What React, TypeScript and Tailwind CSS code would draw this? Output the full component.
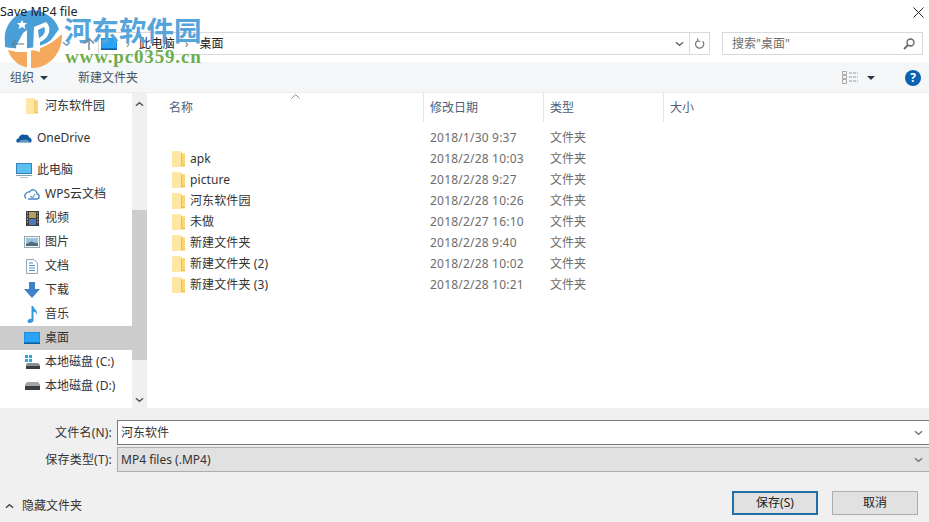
const FONT = "font-['Noto_Sans','Noto_Sans_CJK_SC',sans-serif]";

const Folder = ({ className = "w-[13px] h-[16px]" }: { className?: string }) => (
  <svg viewBox="0 0 13 15" preserveAspectRatio="none" className={className}>
    <path d="M0 0.5H9L10 2H13V15H0Z" fill="#fbd774" />
    <path d="M0 0.5H9L10 2V13H13V15H0Z" fill="#fde7a3" />
    <path d="M9 2L10 2V13H13V14H9Z" fill="#e8c05f" />
  </svg>
);

const Chevron = ({ up = false, color = "#555" }: { up?: boolean; color?: string }) => (
  <svg viewBox="0 0 10 6" className="w-[9px] h-[6px]">
    <path d={up ? "M1 5L5 1.5L9 5" : "M1 1L5 4.5L9 1"} fill="none" stroke={color} strokeWidth="1.6" />
  </svg>
);

const Caret = () => (
  <svg viewBox="0 0 8 4" className="w-[8px] h-[4px]">
    <path d="M0 0H8L4 4Z" fill="#2b3a4a" />
  </svg>
);

const icons: Record<string, React.ReactNode> = {
  folder: <Folder className="w-[12px] h-[16px]" />,
  cloud: (
    <svg viewBox="0 0 16 10" className="w-[16px] h-[10px]">
      <path d="M1 9.5C-0.5 8 0.5 5.5 2.5 5.5C3 2.5 6 0.5 9 2C11 1 13 2.5 13 4.5C15 4.5 16.5 7 15 9.5Z" fill="#0f5a9e" />
      <path d="M3 9.5C3 7.5 6 6.5 8 7C10 6 13 7 14 9.5Z" fill="#fff" opacity="0.35" />
    </svg>
  ),
  pc: (
    <svg viewBox="0 0 16 15" className="w-[16px] h-[15px]">
      <rect x="0.5" y="0.5" width="15" height="10" fill="#5cc0f2" stroke="#3a7fb5" />
      <rect x="0" y="12" width="16" height="1" fill="#7fa3bd" />
      <rect x="4" y="14" width="8" height="1" fill="#b5c5d1" />
    </svg>
  ),
  wps: (
    <svg viewBox="0 0 16 12" className="w-[16px] h-[12px]">
      <path d="M4 11H12.5C16 11 16 6.5 13 6C13 2 8 0 5.5 4C2 3.5 -1 8 2 10.5" fill="none" stroke="#4a86c5" strokeWidth="1.3" />
      <path d="M6.5 8L8.5 10L11 6" fill="none" stroke="#67a8dc" strokeWidth="1.3" />
    </svg>
  ),
  video: (
    <svg viewBox="0 0 13 15" className="w-[13px] h-[15px]">
      <rect width="13" height="15" fill="#3d3d3d" />
      <rect x="3" y="1" width="7" height="6" fill="#b5a062" />
      <rect x="3" y="8" width="7" height="6" fill="#4d7ab8" />
      <path d="M1 2h1M1 5h1M1 8h1M1 11h1M11 2h1M11 5h1M11 8h1M11 11h1" stroke="#ddd" strokeWidth="1.2" />
    </svg>
  ),
  image: (
    <svg viewBox="0 0 16 12" className="w-[16px] h-[12px]">
      <rect x="0.5" y="0.5" width="15" height="11" fill="#f2f5f8" stroke="#9aa5ad" />
      <rect x="2" y="2" width="12" height="8" fill="#9cc3dc" />
      <path d="M2 8L7 5.5L14 7.5V10H2Z" fill="#4f6b7d" />
    </svg>
  ),
  doc: (
    <svg viewBox="0 0 12 15" className="w-[12px] h-[15px]">
      <path d="M0.5 0.5H8L11.5 4V14.5H0.5Z" fill="#fbfcfd" stroke="#9aa5ad" />
      <path d="M3 4H7M3 6.5H9M3 9H9M3 11.5H9" stroke="#4f93c4" />
    </svg>
  ),
  download: (
    <svg viewBox="0 0 16 16" className="w-[16px] h-[16px]">
      <path d="M5 0H11V7H16L8 16L0 7H5Z" fill="#3f82cb" />
    </svg>
  ),
  music: (
    <svg viewBox="0 0 11 17" className="w-[11px] h-[17px]">
      <path d="M4.5 0H6C6.5 3 11 4 10 9C9.5 6.5 8 6 6.5 5.5V14C6.5 16 4.5 17 2.5 17C0.5 17 0 15 1 14C2 13 3.5 12.5 4.5 13Z" fill="#2f97dc" />
    </svg>
  ),
  desktop: (
    <svg viewBox="0 0 16 12" className="w-[16px] h-[12px]">
      <rect width="16" height="12" fill="#1f8fe8" />
      <rect x="1" y="1" width="14" height="9" fill="#2aa3f5" />
      <rect y="10.5" width="16" height="1.5" fill="#0f5f9e" />
    </svg>
  ),
  driveC: (
    <svg viewBox="0 0 15 14" className="w-[15px] h-[14px]">
      <path d="M0 0h3v3H0zM4 0h3v3H4zM0 4h3v3H0zM4 4h3v3H4z" fill="#2fa8d8" />
      <path d="M2 8H13L15 10V14H1V10Z" fill="#8a8f93" />
      <rect x="1" y="11" width="14" height="3" fill="#3c3f42" />
    </svg>
  ),
  driveD: (
    <svg viewBox="0 0 15 8" className="w-[15px] h-[8px]">
      <path d="M2 0H13L15 2.5V8H0V2.5Z" fill="#a3a7aa" />
      <rect y="4" width="15" height="4" fill="#3c3f42" />
    </svg>
  ),
};

const navGroups = [
  [{ icon: "folder", label: "河东软件园", indent: true }],
  [{ icon: "cloud", label: "OneDrive", indent: false }],
  [
    { icon: "pc", label: "此电脑", indent: false },
    { icon: "wps", label: "WPS云文档", indent: true },
    { icon: "video", label: "视频", indent: true },
    { icon: "image", label: "图片", indent: true },
    { icon: "doc", label: "文档", indent: true },
    { icon: "download", label: "下载", indent: true },
    { icon: "music", label: "音乐", indent: true },
    { icon: "desktop", label: "桌面", indent: true, selected: true },
    { icon: "driveC", label: "本地磁盘 (C:)", indent: true },
    { icon: "driveD", label: "本地磁盘 (D:)", indent: true },
  ],
];

const files = [
  { name: "", date: "2018/1/30 9:37" },
  { name: "apk", date: "2018/2/28 10:03" },
  { name: "picture", date: "2018/2/28 9:27" },
  { name: "河东软件园", date: "2018/2/28 10:26" },
  { name: "未做", date: "2018/2/27 16:10" },
  { name: "新建文件夹", date: "2018/2/28 9:40" },
  { name: "新建文件夹 (2)", date: "2018/2/28 10:02" },
  { name: "新建文件夹 (3)", date: "2018/2/28 10:21" },
];

const columns = [
  { label: "名称", width: "w-[270px]" },
  { label: "修改日期", width: "w-[120px]" },
  { label: "类型", width: "w-[120px]" },
  { label: "大小", width: "w-[81px]" },
];

const Watermark = () => (
  <div className="absolute left-0 top-0 w-[210px] h-[72px] pointer-events-none">
    <svg viewBox="0 0 70 72" className="absolute left-0 top-0 w-[70px] h-[72px]">
      <path d="M5 43A28 28 0 0 1 59 29L51 40C40 49 20 50 5 47Z" fill="#4a9fd8" />
      <path d="M8 50C22 54 44 52 62 34C63 51 50 68 33 68C20 68 11 60 8 50Z" fill="#f4a95c" />
      <path d="M15 48L23 33L27 30V52H15Z" fill="#fff" />
      <path d="M27 50H31V69H27Z" fill="#fff" />
      <path d="M33 50L34 27L46 22C52 27 50 38 40 42V52Z" fill="#fff" />
      <path d="M38 30L44 27C46 30 45 35 39 38Z" fill="#4a9fd8" />
      <path d="M22 20L23.5 23L27 23L24.5 25.5L25.5 29L22 27L18.5 29L19.5 25.5L17 23L20.5 23Z" fill="#fff" />
    </svg>
    <div className="absolute left-[64px] top-[11px] text-[27.5px] leading-[36px] font-bold text-[#55a5dc] font-['Noto_Sans_CJK_SC',sans-serif] whitespace-nowrap">河东软件园</div>
    <div className="absolute left-[65px] top-[47px] text-[19px] leading-[20px] font-bold text-[#6cae4e] font-['Liberation_Serif',serif] tracking-[0.85px] whitespace-nowrap">www.pc0359.cn</div>
  </div>
);

export default function App() {
  return (
    <div className={`relative w-[929px] h-[522px] overflow-hidden bg-white text-[12px] text-[#333] ${FONT}`}>
      {/* title bar */}
      <div className="relative z-10 h-[22px] flex items-center justify-between pt-[2px] pr-[3px]">
        <span className="text-[#222] text-[12.5px]">Save MP4 file</span>
        <svg viewBox="0 0 11 11" className="w-[11px] h-[11px] mr-[2px]">
          <path d="M0.5 0.5L10.5 10.5M10.5 0.5L0.5 10.5" stroke="#222" strokeWidth="1" />
        </svg>
      </div>

      {/* address row */}
      <div className="h-[40px] pt-[10px] flex items-start">
        <div className="relative z-10 w-[98px] h-[23px] flex items-center pl-[11px]">
          <svg viewBox="0 0 13 10" className="w-[13px] h-[10px]">
            <path d="M13 5H1M5 1L1 5L5 9" fill="none" stroke="#5f7d96" strokeWidth="1.2" />
          </svg>
          <span className="ml-[38px] flex"><Chevron color="#6f9fc4" /></span>
          <svg viewBox="0 0 12 13" className="ml-[12px] w-[12px] h-[13px]">
            <path d="M6 13V1.5M1 6.5L6 1.5L11 6.5" fill="none" stroke="#7b8794" strokeWidth="1.5" />
          </svg>
        </div>
        <div className="w-[612px] h-[23px] border border-[#d9d9d9] flex items-center">
          <div className="pl-[2px] flex">{icons.desktop}</div>
          <span className="ml-[9px] text-[#888]">›</span>
          <span className="ml-[9px] text-[#222]">此电脑</span>
          <span className="ml-[10px] text-[#777]">›</span>
          <span className="ml-[11px] text-[#222]">桌面</span>
          <div className="ml-auto w-[20px] flex justify-center"><Chevron color="#666" /></div>
          <div className="w-[20px] h-full border-l border-[#d9d9d9] flex items-center justify-center">
            <svg viewBox="0 0 12 13" className="w-[11px] h-[12px]">
              <path d="M9.5 3.5A4.5 4.5 0 1 1 4 2.6M4 0.5V3.5H7" fill="none" stroke="#777" strokeWidth="1.3" />
            </svg>
          </div>
        </div>
        <div className="ml-[12px] w-[201px] h-[23px] border border-[#d9d9d9] flex items-center pl-[9px] pr-[7px] text-[#6d6d6d]">
          <span>搜索"桌面"</span>
          <svg viewBox="0 0 12 12" className="ml-auto w-[12px] h-[12px]">
            <circle cx="7.5" cy="4.5" r="3.5" fill="none" stroke="#666" strokeWidth="1.4" />
            <path d="M5 7L1 11" stroke="#666" strokeWidth="1.8" />
          </svg>
        </div>
      </div>

      {/* toolbar */}
      <div className="h-[31px] bg-[#f5f6f7] border-b border-[#ececec] flex items-center pt-[1px] pl-[10px] pr-[8px] text-[#44566a]">
        <span>组织</span>
        <span className="ml-[6px] flex"><Caret /></span>
        <span className="ml-[30px]">新建文件夹</span>
        <svg viewBox="0 0 16 13" className="ml-auto w-[16px] h-[13px]">
          <path d="M0.5 0.5h4v3h-4zM0.5 4.5h4v3h-4zM0.5 8.5h4v4h-4z" fill="none" stroke="#aaa" />
          <path d="M7 2h9M7 6h9M7 10h9" stroke="#9a9a9a" strokeDasharray="3 1" />
        </svg>
        <span className="ml-[9px] flex"><Caret /></span>
        <span className="ml-[30px] w-[16px] h-[16px] rounded-full bg-[#0b63b0] text-white text-[12px] font-bold flex items-center justify-center">?</span>
      </div>

      {/* body */}
      <div className="h-[315px] flex">
        <div className="w-[132px] pt-[1px] flex flex-col gap-[8px] overflow-hidden">
          {navGroups.map((group, i) => (
            <div key={i}>
              {group.map((item: any) => (
                <div
                  key={item.label}
                  className={`h-[24px] flex items-center ${item.selected ? "bg-[#cccccc]" : ""} text-[#333]`}
                >
                  <div className={`${item.indent ? "w-[42px] pl-[24px]" : "w-[34px] pl-[16px]"} flex items-center justify-start`}>
                    <span className="flex w-[16px] justify-center">{icons[item.icon]}</span>
                  </div>
                  <span className="ml-[3px] whitespace-nowrap">{item.label}</span>
                </div>
              ))}
            </div>
          ))}
        </div>

        {/* scrollbar */}
        <div className="w-[15px] bg-[#f0f0f0] flex flex-col items-center">
          <div className="h-[20px] flex items-center justify-center pt-[1px]"><Chevron up /></div>
          <div className="h-[97px]" />
          <div className="w-full h-[150px] bg-[#cdcdcd]" />
          <div className="flex-1 flex items-end pb-[5px]"><Chevron /></div>
        </div>

        {/* file list */}
        <div className="flex-1 pl-[3px]">
          <div className="relative h-[29px] flex pl-[3px] text-[#4c607a]">
            <svg viewBox="0 0 9 5" className="absolute left-[141px] top-[1px] w-[9px] h-[5px]">
              <path d="M0.5 4.5L4.5 0.5L8.5 4.5" fill="none" stroke="#888" />
            </svg>
            {columns.map((col, i) => (
              <div
                key={col.label}
                className={`${col.width} ${i === 0 ? "pl-[16px]" : "pl-[6px] border-l border-[#e5e5e5]"} flex items-center pt-[1px]`}
              >
                {col.label}
              </div>
            ))}
          </div>
          <div className="pt-[5px]">
            {files.map((f) => (
              <div key={f.date} className="h-[21px] flex items-center pl-[3px]">
                <div className="w-[270px] flex items-center pl-[19px] text-[#333]">
                  {f.name && <Folder />}
                  <span className="ml-[5px] whitespace-nowrap tracking-[0.1px]">{f.name}</span>
                </div>
                <div className="w-[120px] pl-[7px] text-[#6d6d6d] whitespace-nowrap tracking-[0.2px]">{f.date}</div>
                <div className="w-[120px] pl-[7px] text-[#6d6d6d]">文件夹</div>
              </div>
            ))}
          </div>
        </div>
      </div>

      {/* footer */}
      <div className="h-[114px] bg-[#f0f0f0] pt-[12px]">
        <div className="h-[25px] flex items-center">
          <label className="w-[113px] text-right text-[#333] pr-[1px] tracking-[0.2px]">文件名(N):</label>
          <div className="ml-[4px] flex-1 h-full bg-white border border-[#7a7a7a] border-r-0 flex items-center pl-[3px] pr-[6px] text-[#333]">
            <span>河东软件</span>
            <span className="ml-auto"><Chevron color="#777" /></span>
          </div>
        </div>
        <div className="mt-[2px] h-[25px] flex items-center">
          <label className="w-[113px] text-right text-[#333] pr-[1px] tracking-[0.2px]">保存类型(T):</label>
          <div className="ml-[4px] flex-1 h-full bg-[#e1e1e1] border border-[#adadad] border-r-0 flex items-center pl-[3px] pr-[6px] text-[#333]">
            <span>MP4 files (.MP4)</span>
            <span className="ml-auto"><Chevron color="#777" /></span>
          </div>
        </div>
        <div className="mt-[19px] flex items-center pl-[5px] pr-[11px]">
          <span className="mt-[6px] flex"><Chevron up color="#444" /></span>
          <span className="ml-[8px] mt-[6px] text-[#333]">隐藏文件夹</span>
          <button className="ml-auto w-[86px] h-[24px] bg-[#e1e1e1] border-2 border-[#1f6fa8] text-[#222]">保存(S)</button>
          <button className="ml-[14px] w-[86px] h-[24px] bg-[#e1e1e1] border border-[#adadad] text-[#222]">取消</button>
        </div>
      </div>

      <Watermark />
    </div>
  );
}
